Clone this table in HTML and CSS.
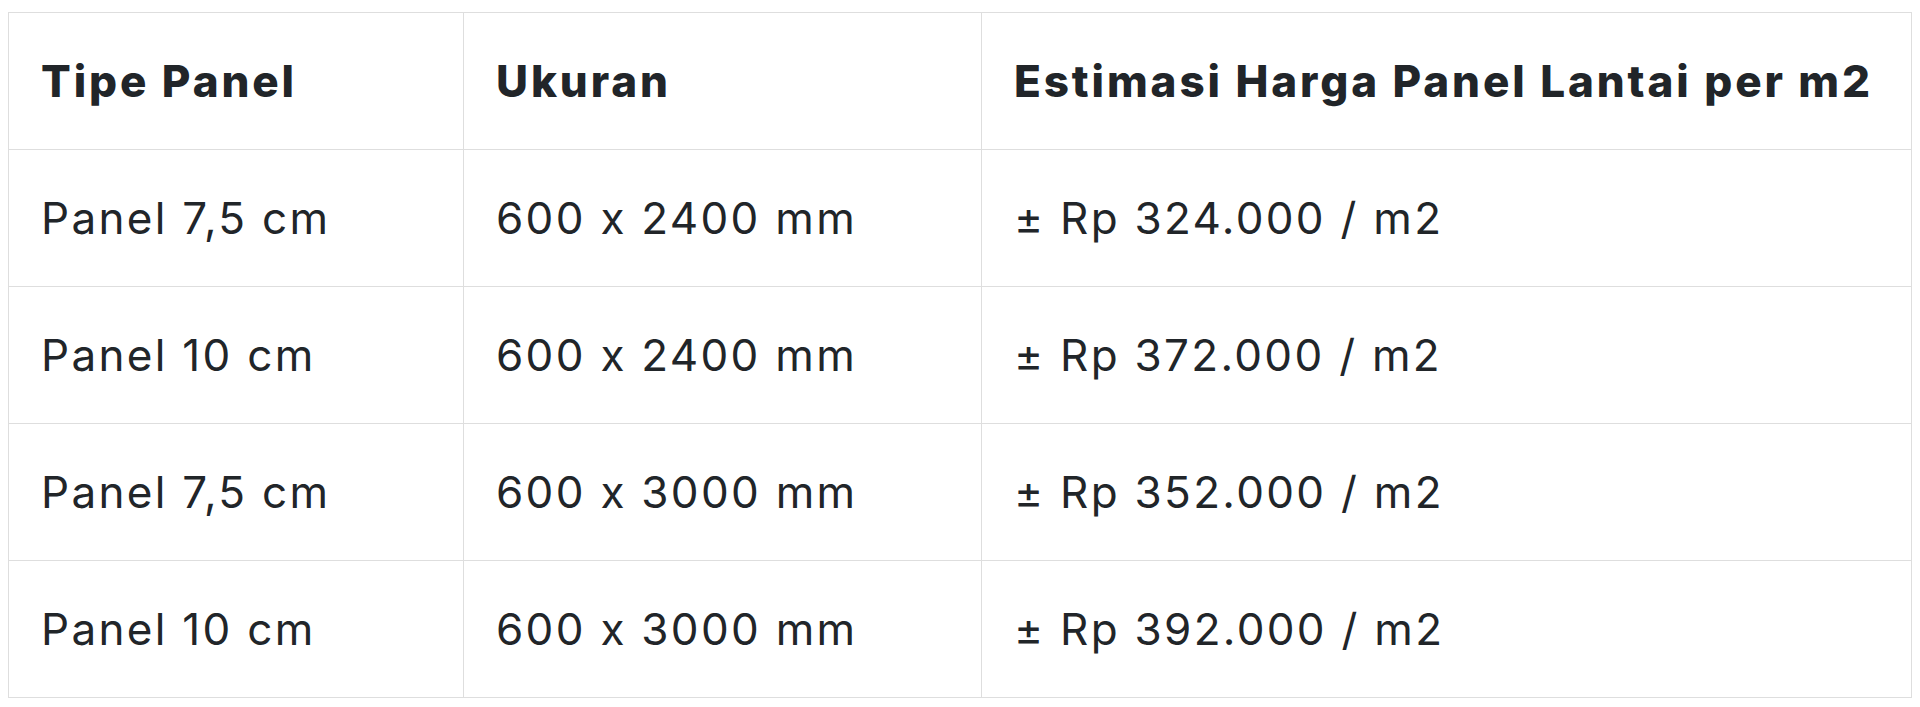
FILE: index.html
```html
<!DOCTYPE html>
<html lang="id">
<head>
<meta charset="utf-8">
<title>Harga Panel Lantai</title>
<link rel="stylesheet" href="styles.css">
</head>
<body>
<table class="price-table">
  <colgroup>
    <col class="col-type">
    <col class="col-size">
    <col class="col-price">
  </colgroup>
  <thead>
    <tr>
      <th>Tipe Panel</th>
      <th>Ukuran</th>
      <th>Estimasi Harga Panel Lantai per m2</th>
    </tr>
  </thead>
  <tbody>
    <tr>
      <td>Panel 7,5 cm</td>
      <td>600 x 2400 mm</td>
      <td>± Rp 324.000 / m2</td>
    </tr>
    <tr>
      <td>Panel 10 cm</td>
      <td>600 x 2400 mm</td>
      <td>± Rp 372.000 / m2</td>
    </tr>
    <tr>
      <td>Panel 7,5 cm</td>
      <td>600 x 3000 mm</td>
      <td>± Rp 352.000 / m2</td>
    </tr>
    <tr>
      <td>Panel 10 cm</td>
      <td>600 x 3000 mm</td>
      <td>± Rp 392.000 / m2</td>
    </tr>
  </tbody>
</table>
</body>
</html>
```

FILE: styles.css
```css
html, body {
  background: #ffffff;
}
body {
  margin: 12px 8px 8px 8px;
  font-family: Inter, "Noto Sans", sans-serif;
  font-feature-settings: "calt" 0;
  color: #212529;
}
.price-table {
  width: 1903px;
  border-collapse: collapse;
  table-layout: fixed;
}
.col-type { width: 455px; }
.col-size { width: 518px; }
.col-price { width: 930px; }
.price-table th,
.price-table td {
  height: 137px;
  box-sizing: border-box;
  padding: 0 0 0 32px;
  border: 1px solid #dedede;
  text-align: left;
  vertical-align: middle;
  font-size: 44px;
  white-space: nowrap;
}
.price-table th {
  font-weight: 800;
  letter-spacing: 2.9px;
}
.price-table td {
  font-weight: 400;
  letter-spacing: 2.3px;
}
```
